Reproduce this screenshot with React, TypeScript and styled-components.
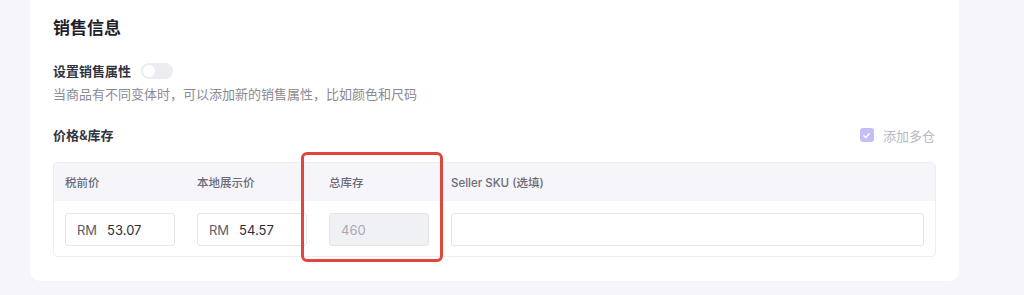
import styled, { createGlobalStyle } from "styled-components";

const GlobalStyle = createGlobalStyle`
  html, body {
    margin: 0;
    padding: 0;
    background: #f5f5fa;
    font-family: "Inter", "Noto Sans CJK SC", sans-serif;
  }
`;

const Page = styled.div`
  padding: 0 65px 14px 30px;
`;

const Card = styled.div`
  background: #ffffff;
  border-radius: 0 0 10px 10px;
  padding: 15px 23px 24px 23px;
`;

const Title = styled.div`
  font-size: 17px;
  line-height: 26px;
  font-weight: 700;
  color: #1f1f2b;
`;

const Row = styled.div<{ $mt: number; $between?: boolean }>`
  display: flex;
  align-items: center;
  justify-content: ${(p) => (p.$between ? "space-between" : "flex-start")};
  gap: 10px;
  height: 20px;
  margin-top: ${(p) => p.$mt}px;
`;

const Label = styled.span`
  font-size: 13px;
  line-height: 20px;
  font-weight: 600;
  color: #333340;
`;

const Toggle = styled.span`
  position: relative;
  width: 32px;
  height: 16px;
  border-radius: 8px;
  background: #ececf1;
  &::after {
    content: "";
    position: absolute;
    left: 2px;
    top: 2px;
    width: 12px;
    height: 12px;
    border-radius: 50%;
    background: #ffffff;
  }
`;

const Hint = styled.div`
  margin-top: 3px;
  font-size: 13px;
  line-height: 20px;
  color: #8a8a94;
`;

const CheckWrap = styled.label`
  display: flex;
  align-items: center;
  gap: 9px;
  margin-right: 1px;
  font-size: 13px;
  color: #b8b8c0;
`;

const CheckBox = styled.span`
  display: flex;
  align-items: center;
  justify-content: center;
  width: 14px;
  height: 14px;
  border-radius: 3px;
  background: #c4bff6;
`;

const Table = styled.div`
  position: relative;
  margin-top: 17px;
  border: 1px solid #ededf2;
  border-radius: 4px;
`;

const Grid = styled.div`
  display: grid;
  grid-template-columns: 110px 110px 100px 1fr;
  column-gap: 22px;
  padding: 0 11px;
`;

const Head = styled(Grid)`
  height: 38px;
  align-items: center;
  background: #f5f5fa;
`;

const HeadCell = styled.span`
  font-size: 11.5px;
  font-weight: 500;
  color: #6b6b76;
`;

const Body = styled(Grid)`
  padding-top: 12px;
  padding-bottom: 10px;
`;

const Input = styled.div<{ $disabled?: boolean }>`
  display: flex;
  align-items: center;
  gap: 10px;
  height: 33px;
  box-sizing: border-box;
  padding: 0 11px;
  border: 1px solid #e4e4ea;
  border-radius: 3px;
  background: ${(p) => (p.$disabled ? "#f0f1f5" : "#ffffff")};
  font-size: 13px;
  color: ${(p) => (p.$disabled ? "#a9a9b3" : "#2e2e38")};
`;

const Prefix = styled.span`
  color: #5e5e68;
`;

const Highlight = styled.div`
  position: absolute;
  left: 247px;
  top: -11px;
  width: 142px;
  height: 110px;
  box-sizing: border-box;
  border: 3px solid #e0463d;
  border-radius: 6px;
  pointer-events: none;
`;

export default function App() {
  return (
    <>
      <GlobalStyle />
      <Page>
        <Card>
          <Title>销售信息</Title>
          <Row $mt={20}>
            <Label>设置销售属性</Label>
            <Toggle />
          </Row>
          <Hint>当商品有不同变体时，可以添加新的销售属性，比如颜色和尺码</Hint>
          <Row $mt={21} $between>
            <Label>价格&amp;库存</Label>
            <CheckWrap>
              <CheckBox>
                <svg width="9" height="9" viewBox="0 0 10 10" fill="none">
                  <path d="M2 5.2 L4.2 7.2 L8 3" stroke="#fff" strokeWidth="1.6" strokeLinecap="round" strokeLinejoin="round" />
                </svg>
              </CheckBox>
              添加多仓
            </CheckWrap>
          </Row>
          <Table>
            <Head>
              <HeadCell>税前价</HeadCell>
              <HeadCell>本地展示价</HeadCell>
              <HeadCell>总库存</HeadCell>
              <HeadCell>Seller SKU (选填)</HeadCell>
            </Head>
            <Body>
              <Input>
                <Prefix>RM</Prefix>53.07
              </Input>
              <Input>
                <Prefix>RM</Prefix>54.57
              </Input>
              <Input $disabled>460</Input>
              <Input />
            </Body>
            <Highlight />
          </Table>
        </Card>
      </Page>
    </>
  );
}
